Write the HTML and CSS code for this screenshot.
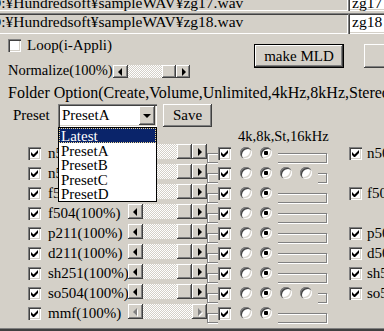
FILE: index.html
```html
<!DOCTYPE html>
<html lang="ja">
<head>
  <meta charset="UTF-8">
  <title>MLD maker</title>
  <link rel="stylesheet" href="styles.css">
</head>
<body>
  <div class="paths">
    <div class="path-row first">
      <div class="path">D:¥Hundredsoft¥sampleWAV¥zg17.wav</div>
      <div class="name">zg17</div>
    </div>
    <div class="path-row">
      <div class="path">D:¥Hundredsoft¥sampleWAV¥zg18.wav</div>
      <div class="name">zg18</div>
    </div>
  </div>

  <div class="opts">
    <div class="opts-left">
      <div class="loop"><span class="chk"></span><span class="txt">Loop(i-Appli)</span></div>
      <div class="norm">
        <span class="norm-lbl">Normalize(100%)</span>
        <div class="hscroll small">
          <span class="sb-btn raised left"></span>
          <span class="sb-track"></span>
          <span class="sb-thumb raised"></span>
          <span class="sb-btn raised right"></span>
        </div>
      </div>
    </div>
    <button class="btn def">make MLD</button>
    <button class="btn next"></button>
  </div>

  <div class="folder">Folder Option(Create,Volume,Unlimited,4kHz,8kHz,Stereo)</div>

  <div class="preset">
    <span class="preset-lbl">Preset</span>
    <div class="combo">
      <span class="combo-val">PresetA</span>
      <span class="combo-btn raised"></span>
      <div class="list">
        <div class="sel">Latest</div>
        <div>PresetA</div>
        <div>PresetB</div>
        <div>PresetC</div>
        <div>PresetD</div>
      </div>
    </div>
    <button class="btn save">Save</button>
  </div>

  <div class="hdr">4k,8k,St,16kHz</div>

  <div class="rows">
    <div class="row">
      <span class="chk on"></span><span class="lbl">n501(100%)</span>
      <div class="hscroll"><span class="sb-btn raised left"></span><span class="sb-track"></span><span class="sb-thumb raised"></span><span class="sb-btn raised right"></span></div>
      <div class="grp"><div class="grp-ctrls"><span class="chk on"></span><span class="opt"><span class="radio"></span></span><span class="opt"><span class="radio on"></span></span></div></div>
      <span class="chk on rchk"></span><span class="rlbl">n501(100%)</span>
    </div>
    <div class="row">
      <span class="chk on"></span><span class="lbl">n504(100%)</span>
      <div class="hscroll"><span class="sb-btn raised left"></span><span class="sb-track"></span><span class="sb-thumb raised"></span><span class="sb-btn raised right"></span></div>
      <div class="grp"><div class="grp-ctrls"><span class="chk on"></span><span class="opt"><span class="radio"></span></span><span class="opt"><span class="radio on"></span></span><span class="opt"><span class="radio"></span></span><span class="opt"><span class="radio"></span></span></div></div>
    </div>
    <div class="row">
      <span class="chk on"></span><span class="lbl">f501(100%)</span>
      <div class="hscroll"><span class="sb-btn raised left"></span><span class="sb-track"></span><span class="sb-thumb raised"></span><span class="sb-btn raised right"></span></div>
      <div class="grp"><div class="grp-ctrls"><span class="chk on"></span><span class="opt"><span class="radio"></span></span><span class="opt"><span class="radio on"></span></span></div></div>
      <span class="chk on rchk"></span><span class="rlbl">f501(100%)</span>
    </div>
    <div class="row">
      <span class="chk on"></span><span class="lbl">f504(100%)</span>
      <div class="hscroll"><span class="sb-btn raised left"></span><span class="sb-track"></span><span class="sb-thumb raised"></span><span class="sb-btn raised right"></span></div>
      <div class="grp"><div class="grp-ctrls"><span class="chk on"></span><span class="opt"><span class="radio"></span></span><span class="opt"><span class="radio on"></span></span></div></div>
    </div>
    <div class="row">
      <span class="chk on"></span><span class="lbl">p211(100%)</span>
      <div class="hscroll"><span class="sb-btn raised left"></span><span class="sb-track"></span><span class="sb-thumb raised"></span><span class="sb-btn raised right"></span></div>
      <div class="grp"><div class="grp-ctrls"><span class="chk on"></span><span class="opt"><span class="radio"></span></span><span class="opt"><span class="radio on"></span></span></div></div>
      <span class="chk on rchk"></span><span class="rlbl">p504(100%)</span>
    </div>
    <div class="row">
      <span class="chk on"></span><span class="lbl">d211(100%)</span>
      <div class="hscroll"><span class="sb-btn raised left"></span><span class="sb-track"></span><span class="sb-thumb raised"></span><span class="sb-btn raised right"></span></div>
      <div class="grp"><div class="grp-ctrls"><span class="chk on"></span><span class="opt"><span class="radio"></span></span><span class="opt"><span class="radio on"></span></span></div></div>
      <span class="chk on rchk"></span><span class="rlbl">d504(100%)</span>
    </div>
    <div class="row">
      <span class="chk on"></span><span class="lbl">sh251(100%)</span>
      <div class="hscroll"><span class="sb-btn raised left"></span><span class="sb-track"></span><span class="sb-thumb raised"></span><span class="sb-btn raised right"></span></div>
      <div class="grp"><div class="grp-ctrls"><span class="chk on"></span><span class="opt"><span class="radio"></span></span><span class="opt"><span class="radio on"></span></span></div></div>
      <span class="chk on rchk"></span><span class="rlbl">sh504(100%)</span>
    </div>
    <div class="row">
      <span class="chk on"></span><span class="lbl">so504(100%)</span>
      <div class="hscroll"><span class="sb-btn raised left"></span><span class="sb-track"></span><span class="sb-thumb raised"></span><span class="sb-btn raised right"></span></div>
      <div class="grp"><div class="grp-ctrls"><span class="chk on"></span><span class="opt"><span class="radio"></span></span><span class="opt"><span class="radio on"></span></span><span class="opt"><span class="radio"></span></span><span class="opt"><span class="radio"></span></span></div></div>
      <span class="chk on rchk"></span><span class="rlbl">so501(100%)</span>
    </div>
    <div class="row">
      <span class="chk on"></span><span class="lbl">mmf(100%)</span>
      <div class="hscroll off"><span class="sb-btn raised left"></span><span class="sb-track"></span><span class="sb-btn raised right"></span></div>
      <div class="grp"><div class="grp-ctrls"><span class="chk on"></span><span class="opt"><span class="radio"></span></span><span class="opt"><span class="radio on"></span></span></div></div>
    </div>
  </div>

  <div class="frame-bottom"></div>
</body>
</html>
```

FILE: styles.css
```css
html { overflow: hidden; }
body {
  margin: 0;
  width: 384px;
  height: 331px;
  overflow: hidden;
  background: #d4d0c8;
  color: #000;
  font-family: "Liberation Serif", "Times New Roman", serif;
  font-size: 15px;
  white-space: nowrap;
}

/* 3d borders */
.raised {
  background: #d4d0c8;
  box-shadow: inset -1px -1px #404040, inset 1px 1px #fff, inset -2px -2px #808080, inset 2px 2px #d4d0c8;
}
.chk, .path, .name, .combo {
  box-shadow: inset 1px 1px #808080, inset 2px 2px #404040, inset -1px -1px #fff, inset -2px -2px #d4d0c8;
}

/* path fields */
.paths {
  margin-top: -10px;
  display: flex;
  flex-direction: column;
  gap: 2px;
}
.path-row {
  display: flex;
  height: 21px;
}
.path {
  flex-shrink: 0;
  box-sizing: border-box;
  width: 362px;
  margin-left: -14px;
  padding-left: 4px;
  font-size: 15.5px;
  line-height: 17px;
}
.path-row.first .path,
.path-row.first .name { padding-top: 4px; }
.name {
  flex-shrink: 0;
  box-sizing: border-box;
  width: 60px;
  padding-left: 4px;
  background: #fff;
  font-size: 15.5px;
  line-height: 17px;
}

/* checkbox + radio */
.chk {
  flex-shrink: 0;
  display: flex;
  align-items: center;
  justify-content: center;
  width: 13px;
  height: 13px;
  background: #fff;
}
.chk.on::after {
  content: "";
  width: 7px;
  height: 7px;
  background: #000;
  clip-path: polygon(0 2px, 2.5px 4.5px, 7px 0, 7px 3px, 2.5px 7.5px, 0 5px);
}
.radio {
  display: flex;
  align-items: center;
  justify-content: center;
  width: 12px;
  height: 12px;
  border-radius: 50%;
  background: #fff;
  box-shadow: inset 1px 1px #808080, inset 2px 2px #404040, inset -1px -1px #fff, inset -2px -2px #d4d0c8;
}
.radio.on::after {
  content: "";
  width: 4px;
  height: 4px;
  border-radius: 1px;
  background: #000;
}

/* scrollbar */
.hscroll {
  flex-shrink: 0;
  display: flex;
  width: 79px;
  height: 15px;
  margin-top: -3px;
}
.sb-btn {
  display: flex;
  align-items: center;
  justify-content: center;
  width: 15px;
}
.sb-btn::before {
  content: "";
  border-top: 4px solid transparent;
  border-bottom: 4px solid transparent;
}
.sb-btn.left::before { border-right: 4px solid #000; margin-left: -1px; }
.sb-btn.right::before { border-left: 4px solid #000; margin-left: 1px; }
.sb-track {
  flex: 1;
  background: repeating-conic-gradient(#fff 0 25%, #d4d0c8 0 50%) 0 0 / 2px 2px;
}
.sb-thumb { width: 15px; }
.hscroll.small {
  width: 77px;
  height: 13px;
  margin-top: 0;
}
.hscroll.small .sb-thumb, .hscroll.small .right { width: 14px; }
.hscroll.off .sb-btn::before { filter: drop-shadow(1px 1px 0 #fff); }
.hscroll.off .left::before { border-right-color: #808080; }
.hscroll.off .right::before { border-left-color: #808080; }

/* buttons */
.btn {
  box-sizing: border-box;
  border: none;
  padding: 0;
  font: inherit;
  color: #000;
  background: #d4d0c8;
  box-shadow: inset -1px -1px #404040, inset 1px 1px #fff, inset -2px -2px #808080, inset 2px 2px #d4d0c8;
}
.btn.def {
  flex-shrink: 0;
  width: 90px;
  height: 24px;
  margin-top: 10px;
  border: 1px solid #000;
}
.btn.next {
  flex-shrink: 0;
  width: 80px;
  height: 24px;
  margin-top: 10px;
  margin-left: 20px;
}

/* options */
.opts {
  display: flex;
  align-items: flex-start;
  height: 44px;
  padding-left: 8px;
}
.opts-left {
  flex-shrink: 0;
  width: 246px;
}
.loop {
  display: flex;
  gap: 6px;
  margin-top: 5px;
  line-height: 13px;
}
.norm {
  display: flex;
  align-items: flex-start;
  margin-top: 13px;
}
.norm-lbl {
  width: 105px;
  font-size: 14.5px;
  line-height: 13px;
  margin-top: -1px;
}
.folder {
  margin-top: 8px;
  padding-left: 8px;
  font-size: 16px;
  line-height: 13px;
  height: 13px;
}

/* preset */
.preset {
  display: flex;
  margin-top: 5px;
  height: 23px;
  padding-left: 13px;
}
.preset-lbl {
  width: 45px;
  line-height: 23px;
}
.combo {
  position: relative;
  display: flex;
  align-items: center;
  width: 99px;
  height: 23px;
  background: #fff;
}
.combo-val {
  flex: 1;
  padding-left: 4px;
}
.combo-btn {
  display: flex;
  align-items: center;
  justify-content: center;
  width: 16px;
  height: 19px;
  margin-right: 2px;
}
.combo-btn::before {
  content: "";
  border-left: 4px solid transparent;
  border-right: 4px solid transparent;
  border-top: 4px solid #000;
  margin-top: 1px;
}
.list {
  position: absolute;
  top: 100%;
  left: 0;
  z-index: 2;
  box-sizing: border-box;
  width: 100%;
  border: 1px solid #000;
  background: #fff;
}
.list div {
  height: 14.6px;
  line-height: 16px;
  padding-left: 2px;
}
.list .sel {
  background: #0a246a;
  color: #fff;
  outline: 1px dotted #f0d890;
  outline-offset: -1px;
}
.btn.save {
  width: 49px;
  height: 23px;
  margin-left: 6px;
}

/* sound rows */
.hdr {
  margin-top: 3px;
  padding-left: 238px;
  font-size: 14.5px;
  line-height: 13px;
  height: 13px;
}
.rows { margin-top: 4px; }
.row {
  display: flex;
  align-items: flex-start;
  height: 20px;
  padding-left: 28px;
}
.row > * { flex-shrink: 0; }
.lbl {
  width: 80px;
  margin-left: 7px;
  line-height: 13px;
}
.grp {
  box-sizing: border-box;
  width: 120px;
  height: 10px;
  margin-top: 6px;
  border: 1px solid #808080;
  box-shadow: inset 1px 1px #fff, 1px 1px #fff;
}
.grp-ctrls {
  display: flex;
  align-items: flex-start;
  width: max-content;
  height: 18px;
  margin: -7px 0 0 10px;
  padding-right: 7px;
  background: #d4d0c8;
}
.opt {
  box-sizing: border-box;
  width: 20px;
  padding-left: 9px;
}
.rchk { margin-left: 22px; }
.rlbl {
  margin-left: 5px;
  line-height: 13px;
}

.frame-bottom {
  margin-top: 1px;
  height: 3px;
  border-top: 1px solid #808080;
  background: #404040;
}
```
